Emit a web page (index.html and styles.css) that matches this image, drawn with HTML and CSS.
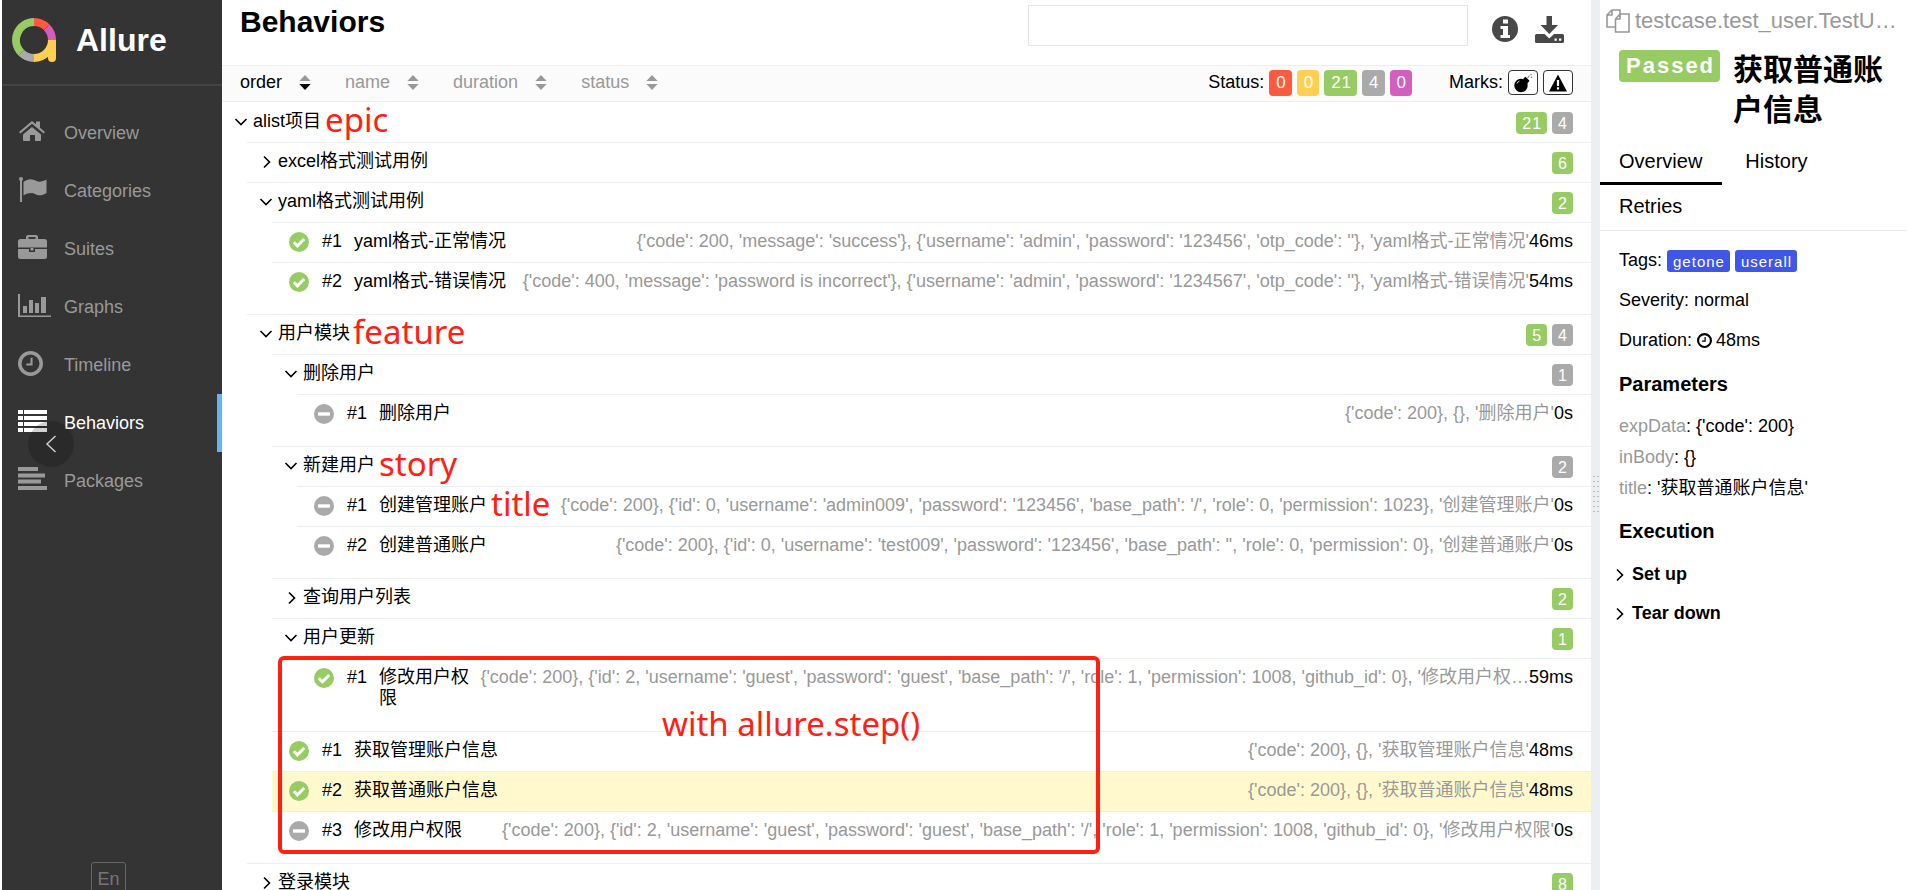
FILE: index.html
```html
<!DOCTYPE html>
<html lang="en">
<head>
<meta charset="utf-8">
<title>Allure Report</title>
<link rel="stylesheet" href="styles.css">
</head>
<body>
<svg class="defs" aria-hidden="true">
  <symbol id="passed" viewBox="0 0 20 20"><circle cx="10" cy="10" r="10" fill="#97cc64"/><path d="M4.8 10.2l3.6 3.6 6.8-6.8" fill="none" stroke="#fff" stroke-width="3"/></symbol>
  <symbol id="skipped" viewBox="0 0 20 20"><circle cx="10" cy="10" r="10" fill="#aaa"/><path d="M4 10h12" stroke="#fff" stroke-width="3.4"/></symbol>
  <symbol id="down" viewBox="0 0 14 14"><path d="M1.5 4l5.5 5.5L12.500 4" fill="none" stroke="currentColor" stroke-width="1.600"/></symbol>
  <symbol id="right" viewBox="0 0 14 14"><path d="M5 1.500l5.500 5.500L5 12.500" fill="none" stroke="currentColor" stroke-width="1.600"/></symbol>
  <symbol id="clock" viewBox="0 0 24 24"><circle cx="12" cy="12" r="10.300" fill="none" stroke="currentColor" stroke-width="3.400"/><path d="M13 6.500v6.500H8" fill="none" stroke="currentColor" stroke-width="2"/></symbol>
</svg>
<div class="app">
  <aside class="side">
    <a class="brand" href="#">
      <svg class="logo" viewBox="0 0 44 44"><g fill="none" stroke-width="8"><path d="M9.300 34.700A18 18 0 0 1 22 4" stroke="#97cc64"/><path d="M22 4A18 18 0 0 1 34.700 9.300" stroke="#fd5a3e"/><path d="M34.700 9.300A18 18 0 0 1 40 22" stroke="#d35ebe"/><path d="M22 40A18 18 0 0 1 9.300 34.700" stroke="#aaa"/><path d="M40 22A18 18 0 0 1 22 40" stroke="#ffd050"/></g><path d="M36 22h8v18a4 4 0 0 1-8 0v-6z" fill="#ffd050"/></svg>
      <span>Allure</span>
    </a>
    <nav class="nav">
      <a href="#"><svg viewBox="0 0 32 28"><path d="M15 8l9 7.500V21a1 1 0 0 1-1 1h-5v-6h-5v6H7a1 1 0 0 1-1-1v-5.500z"/><path d="M2 13L15 2l4 3.300V2.500h4v6.200l5 4.300-1.300 1.500L15 4.800 3.300 14.500z"/></svg>Overview</a>
      <a href="#"><svg viewBox="0 0 32 28"><circle cx="4" cy="2" r="2"/><path d="M3 2h2v23H3zM6.500 5c5-4 9-3 13-1 3 1.500 6 .5 10-1.500V16c-4 2.500-7 3-10.500 1.500-4-2-7.500-2-12.500 1z"/></svg>Categories</a>
      <a href="#"><svg viewBox="0 0 32 28"><path d="M9 4V2a2 2 0 0 1 2-2h8a2 2 0 0 1 2 2v2h6.500A2.500 2.500 0 0 1 30 6.500V12.500H1V6.500A2.500 2.500 0 0 1 3.500 4zM11.500 4h7V2h-7zM1 14h11v3h6v-3h12v7.500a2.500 2.500 0 0 1-2.500 2.500h-24A2.500 2.500 0 0 1 1 21.500zM13.500 13h3v2.500h-3z"/></svg>Suites</a>
      <a href="#"><svg viewBox="0 0 32 28"><path d="M1 1h2v21.500h31V24H1zM6 13h4v7H6zM12 7h4v13h-4zM18 10h4v10h-4zM24 4h5v16h-5z"/></svg>Graphs</a>
      <a href="#"><svg viewBox="0 0 32 28"><use href="#clock" x="1" width="25" height="25"/></svg>Timeline</a>
      <a href="#" class="active"><svg viewBox="0 0 32 28"><path d="M1 1h5v4H1zM7 1h23v4H7zM1 7h5v4H1zM7 7h23v4H7zM1 13h5v4H1zM7 13h23v4H7zM1 19h5v4H1zM7 19h23v4H7z"/></svg>Behaviors</a>
      <a href="#"><svg viewBox="0 0 32 28"><path d="M1 0h20v4H1zM1 6.500h27v4H1zM1 12.500h23v4H1zM1 19h29v4H1z"/></svg>Packages</a>
    </nav>
    <button class="collapse" aria-label="Collapse"><svg viewBox="0 0 12 18"><path d="M10.500 1L2 9l8.500 8" fill="none" stroke="#ccc" stroke-width="1.500"/></svg></button>
    <button class="lang">En</button>
  </aside>

  <main class="main">
    <header class="top">
      <h1>Behaviors</h1>
      <input class="search" type="text" aria-label="Search">
      <button class="tool" aria-label="Information"><svg class="info" viewBox="0 0 26 26"><circle cx="13" cy="13" r="13" fill="#484848"/><path d="M11 3.500h5v4h-5zM8.500 10H16v9h2v3H8.500v-3h2.500v-6H8.500z" fill="#fff"/></svg></button>
      <button class="tool" aria-label="Download CSV"><svg class="download" viewBox="0 0 29 27"><path d="M11.500 0h5.500v9h6L14.300 18 5.500 9h6zM1.500 18H9.500l4.800 4.500 4.800-4.500h8.400a1.500 1.500 0 0 1 1.500 1.500v6a1.500 1.500 0 0 1-1.500 1.500h-26A1.500 1.500 0 0 1 0 25.500v-6A1.500 1.500 0 0 1 1.500 18z" fill="#484848"/><path d="M19.500 22.500h2.300v2.300h-2.300zM24 22.500h2.300v2.300H24z" fill="#fff"/></svg></button>
    </header>
    <div class="filters">
      <button class="sorter on">order<svg viewBox="0 0 12 16"><path class="up" d="M0 6.500L6 0l6 6.500z"/><path d="M0 9.500h12L6 16z"/></svg></button>
      <button class="sorter">name<svg viewBox="0 0 12 16"><path class="up" d="M0 6.500L6 0l6 6.500z"/><path d="M0 9.500h12L6 16z"/></svg></button>
      <button class="sorter">duration<svg viewBox="0 0 12 16"><path class="up" d="M0 6.500L6 0l6 6.500z"/><path d="M0 9.500h12L6 16z"/></svg></button>
      <button class="sorter">status<svg viewBox="0 0 12 16"><path class="up" d="M0 6.500L6 0l6 6.500z"/><path d="M0 9.500h12L6 16z"/></svg></button>
      <div class="group status"><span>Status:</span><button class="chip red">0</button><button class="chip yellow">0</button><button class="chip green">21</button><button class="chip gray">4</button><button class="chip pink">0</button></div>
      <div class="group"><span>Marks:</span><button class="mark" aria-label="Flaky"><svg viewBox="0 0 20 20"><circle cx="8" cy="12.500" r="6.700"/><path d="M10 6l2.500-2.300 4 4-2.300 3z"/><path d="M14.500 5l2-2.500M17.500 1l1 1M19 3.500l-1 1.500" stroke="#888" stroke-width="1.200"/><path d="M4 10.500a4 4 0 0 1 2.500-2.500" fill="none" stroke="#fff" stroke-width=".8"/></svg></button><button class="mark" aria-label="New failed"><svg viewBox="0 0 20 20"><path d="M10 1.500L19 18.500H1z"/><path d="M8.900 7h2.200v6H8.900zM8.900 14.200h2.200v2.200H8.900z" fill="#fff"/></svg></button></div>
    </div>

    <div class="tree">
      <div class="node"><svg><use href="#down"/></svg><span>alist项目</span><em class="note">epic</em><span class="counts"><b class="green">21</b><b class="gray">4</b></span></div>
      <div class="kids">
        <div class="node"><svg><use href="#right"/></svg><span>excel格式测试用例</span><span class="counts"><b class="green">6</b></span></div>
        <div class="node"><svg><use href="#down"/></svg><span>yaml格式测试用例</span><span class="counts"><b class="green">2</b></span></div>
        <div class="kids">
          <a class="leaf" href="#"><svg><use href="#passed"/></svg><span class="num">#1</span><span class="name">yaml格式-正常情况</span><span class="params">{'code': 200, 'message': 'success'}, {'username': 'admin', 'password': '123456', 'otp_code': ''}, 'yaml格式-正常情况'</span><span>46ms</span></a>
          <a class="leaf" href="#"><svg><use href="#passed"/></svg><span class="num">#2</span><span class="name">yaml格式-错误情况</span><span class="params">{'code': 400, 'message': 'password is incorrect'}, {'username': 'admin', 'password': '1234567', 'otp_code': ''}, 'yaml格式-错误情况'</span><span>54ms</span></a>
        </div>
        <div class="node"><svg><use href="#down"/></svg><span>用户模块</span><em class="note tight">feature</em><span class="counts"><b class="green">5</b><b class="gray">4</b></span></div>
        <div class="kids">
          <div class="node"><svg><use href="#down"/></svg><span>删除用户</span><span class="counts"><b class="gray">1</b></span></div>
          <div class="kids">
            <a class="leaf" href="#"><svg><use href="#skipped"/></svg><span class="num">#1</span><span class="name">删除用户</span><span class="params">{'code': 200}, {}, '删除用户'</span><span>0s</span></a>
          </div>
          <div class="node"><svg><use href="#down"/></svg><span>新建用户</span><em class="note">story</em><span class="counts"><b class="gray">2</b></span></div>
          <div class="kids">
            <a class="leaf" href="#"><svg><use href="#skipped"/></svg><span class="num">#1</span><span class="name">创建管理账户<em class="note">title</em></span><span class="params">{'code': 200}, {'id': 0, 'username': 'admin009', 'password': '123456', 'base_path': '/', 'role': 0, 'permission': 1023}, '创建管理账户'</span><span>0s</span></a>
            <a class="leaf" href="#"><svg><use href="#skipped"/></svg><span class="num">#2</span><span class="name">创建普通账户</span><span class="params">{'code': 200}, {'id': 0, 'username': 'test009', 'password': '123456', 'base_path': '', 'role': 0, 'permission': 0}, '创建普通账户'</span><span>0s</span></a>
          </div>
          <div class="node"><svg><use href="#right"/></svg><span>查询用户列表</span><span class="counts"><b class="green">2</b></span></div>
          <div class="node"><svg><use href="#down"/></svg><span>用户更新</span><span class="counts"><b class="green">1</b></span></div>
          <div class="marked">
            <div class="kids">
              <a class="leaf" href="#"><svg><use href="#passed"/></svg><span class="num">#1</span><span class="name narrow">修改用户权限</span><span class="params">{'code': 200}, {'id': 2, 'username': 'guest', 'password': 'guest', 'base_path': '/', 'role': 1, 'permission': 1008, 'github_id': 0}, '修改用户权…</span><span>59ms</span></a>
            </div>
            <a class="leaf" href="#"><svg><use href="#passed"/></svg><span class="num">#1</span><span class="name">获取管理账户信息</span><span class="params">{'code': 200}, {}, '获取管理账户信息'</span><span>48ms</span></a>
            <a class="leaf current" href="#"><svg><use href="#passed"/></svg><span class="num">#2</span><span class="name">获取普通账户信息</span><span class="params">{'code': 200}, {}, '获取普通账户信息'</span><span>48ms</span></a>
            <a class="leaf" href="#"><svg><use href="#skipped"/></svg><span class="num">#3</span><span class="name">修改用户权限</span><span class="params">{'code': 200}, {'id': 2, 'username': 'guest', 'password': 'guest', 'base_path': '/', 'role': 1, 'permission': 1008, 'github_id': 0}, '修改用户权限'</span><span>0s</span></a>
            <div class="frame"><em>with allure.step()</em></div>
          </div>
        </div>
        <div class="node"><svg><use href="#right"/></svg><span>登录模块</span><span class="counts"><b class="green">8</b></span></div>
      </div>
    </div>
  </main>

  <div class="splitter"><span class="grip"></span></div>

  <section class="detail">
    <div class="path"><svg viewBox="0 0 24 24"><path d="M14 4.500V1H6L1 6v12h8M6 1v5H1M14 5h9v18H9.500V10zM14 5v5H9.500" fill="none" stroke="#999" stroke-width="1.600"/></svg><span>testcase.test_user.TestU…</span></div>
    <div class="heading"><span class="verdict">Passed</span><h2>获取普通账户信息</h2></div>
    <div class="tabs"><a href="#" class="active">Overview</a><a href="#">History</a><a href="#">Retries</a></div>
    <div class="body">
      <div class="line">Tags: <span class="tag">getone</span><span class="tag">userall</span></div>
      <div class="line">Severity: normal</div>
      <div class="line">Duration: <svg><use href="#clock"/></svg> 48ms</div>
      <h3>Parameters</h3>
      <ul class="values"><li><i>expData</i>: {'code': 200}</li><li><i>inBody</i>: {}</li><li><i>title</i>: '获取普通账户信息'</li></ul>
      <h3>Execution</h3>
      <button class="stage"><svg><use href="#right"/></svg>Set up</button>
      <button class="stage"><svg><use href="#right"/></svg>Tear down</button>
    </div>
  </section>
</div>
</body>
</html>
```
FILE: styles.css
```css
* { box-sizing: border-box; }
html, body { height: 100%; margin: 0; }
body {
  font: 18px/21px "Liberation Sans", "Noto Sans CJK SC", sans-serif;
  color: #000;
  background: #fff;
  overflow: hidden;
}
a { color: inherit; text-decoration: none; }
button { font: inherit; color: inherit; background: none; border: 0; padding: 0; cursor: pointer; }
h1, h2, h3, ul { margin: 0; padding: 0; }
svg { flex: none; }
.defs { position: absolute; width: 0; height: 0; }

.app { display: flex; height: 100vh; padding-left: 2px; overflow: hidden; }

/* sidebar */
.side { position: relative; flex: none; width: 220px; background: #343434; color: #999; }
.brand { display: flex; align-items: center; gap: 20px; height: 86px; padding: 0 10px 5px; border-bottom: 2px solid #444; color: #fff; font-size: 32px; font-weight: bold; line-height: 40px; }
.logo { width: 44px; height: 44px; }
.nav { padding-top: 18px; }
.nav a { display: flex; align-items: center; gap: 15px; height: 58px; padding-left: 15px; border-right: 5px solid transparent; }
.nav svg { width: 32px; height: 28px; fill: currentColor; overflow: visible; }
.nav .active { color: #fff; border-color: #64b5f6; }
.collapse { position: absolute; left: 26px; top: 421px; width: 46px; height: 46px; border-radius: 50%; background: rgba(0, 0, 0, .18); }
.collapse svg { display: block; width: 12px; height: 18px; margin: 0 auto; }
.lang { position: absolute; left: 89px; bottom: -6px; width: 35px; height: 34px; border: 1px solid #666; border-radius: 3px; color: #777; }

/* list */
.main { flex: 1; min-width: 0; overflow: hidden; }
.top { display: flex; align-items: flex-start; height: 65px; padding: 5px 27px 0 18px; }
h1 { flex: 1; font-size: 30px; line-height: 34px; }
.search { width: 440px; height: 41px; border: 1px solid #e4e4e4; margin-right: 24px; }
.tool { height: 44px; padding-top: 4px; }
.tool + .tool { margin-left: 17px; }
.tool svg { display: block; }
.info { width: 26px; height: 26px; }
.download { width: 29px; height: 27px; }
.filters { display: flex; align-items: center; height: 37px; padding: 0 18px 2px; border: solid #eceff1; border-width: 1px 0; background: #fbfbfb; }
.sorter { display: flex; align-items: center; gap: 17px; margin-right: 34px; color: #999; }
.sorter svg { width: 12px; height: 15px; fill: #999; }
.sorter.on { color: #000; }
.sorter.on svg { fill: #000; }
.sorter .up { fill: #999; }
.group { display: flex; align-items: center; gap: 5px; margin-left: 37px; }
.status { margin-left: auto; }
.chip { height: 26px; padding: 0 5px 0 7px; border-radius: 4px; color: #fff; font-size: 17px; letter-spacing: 1px; }
.mark { width: 30px; height: 25px; border: 1px solid #333; border-radius: 4px; background: #fff; }
.mark svg { display: block; width: 20px; height: 20px; margin: 0 auto; }
.green { background: #97cc64; }
.gray { background: #aaa; }
.red { background: #fd5a3e; }
.yellow { background: #ffd050; }
.pink { background: #d35ebe; }

.kids { margin-left: 25px; }
.kids .kids { padding-bottom: 12px; }
.node, .leaf { display: flex; align-items: flex-start; padding: 8px 18px 10px 13px; border-top: 1px solid #eceff1; }
.tree > .node { border-top-color: transparent; }
.node > svg { width: 14px; height: 14px; margin: 4px 5px 0 -1px; }
.counts { display: flex; align-items: center; gap: 5px; height: 23px; margin: 0 0 -2px auto; }
.counts b { height: 22px; padding: 0 5px 0 6px; border-radius: 4px; color: #fff; font-size: 16px; font-weight: normal; letter-spacing: 1px; line-height: 23px; }
.leaf { padding-left: 17px; }
.leaf > svg { width: 20px; height: 20px; margin: 1px 13px 0 0; }
.num { flex: none; width: 32px; }
.name { flex: none; margin-right: auto; }
.narrow { width: 96px; }
.params { flex: none; white-space: nowrap; color: #999; }
.current { background: #fff9cd; }
.note, .frame em { color: #ff2012; font: 33px/40px "Noto Sans", sans-serif; }
.note { height: 21px; margin-left: 4px; line-height: 17px; white-space: nowrap; }
.tight { margin-left: 3px; }
.name .note { position: absolute; }
.marked { position: relative; padding-bottom: 12px; margin-bottom: -12px; }
.frame { position: absolute; left: 6px; top: -2px; width: calc(62% + 4px); height: 198px; border: 4px solid #ff2012; border-radius: 6px; padding: 44px 0 0 380px; pointer-events: none; }

/* splitter */
.splitter { flex: none; width: 9px; display: flex; align-items: center; justify-content: center; background: #eceff1; }
.grip { width: 7px; height: 40px; margin-top: 98px; background: radial-gradient(circle, #bbb 1px, transparent 1px) 0 0 / 4px 5px; }

/* details */
.detail { flex: none; width: 307px; }
.path { display: flex; align-items: center; gap: 5px; padding: 8px 0 0 6px; font-size: 22px; line-height: 26px; color: #999; }
.path svg { width: 24px; height: 24px; }
.heading { display: flex; align-items: flex-start; gap: 13px; padding: 16px 19px 0; }
.verdict { padding: 0 5px 0 7px; border-radius: 4px; background: #97cc64; color: #fff; font-size: 22px; font-weight: bold; letter-spacing: 2px; line-height: 32px; }
h2 { font-size: 30px; line-height: 40px; }
.tabs { display: flex; flex-wrap: wrap; gap: 0 4px; margin-top: 10px; border-bottom: 1px solid #e8ecee; font-size: 20px; }
.tabs a { height: 45px; padding: 11px 20px 0 19px; border-bottom: 3px solid transparent; }
.tabs .active { border-color: #000; }
.body { padding: 19px 19px 0; }
.line { display: flex; align-items: center; gap: 5px; height: 21px; margin-bottom: 19px; }
.line svg { width: 15px; height: 15px; margin-right: -1px; overflow: visible; }
.tag { height: 22px; padding: 0 5px 0 6px; border-radius: 3px; background: #3f57e6; color: #fff; font-size: 15px; letter-spacing: 1px; line-height: 23px; }
h3 { font-size: 20px; line-height: 24px; margin-top: 21px; }
.values { list-style: none; margin: 15px 0 0; line-height: 31px; }
.values + h3 { margin-top: 15px; }
.values i { font-style: normal; color: #999; }
.stage { display: flex; align-items: center; gap: 6px; height: 39px; margin-left: -7px; font-weight: bold; }
h3 + .stage { margin-top: 12px; }
.stage svg { width: 14px; height: 14px; }
```
